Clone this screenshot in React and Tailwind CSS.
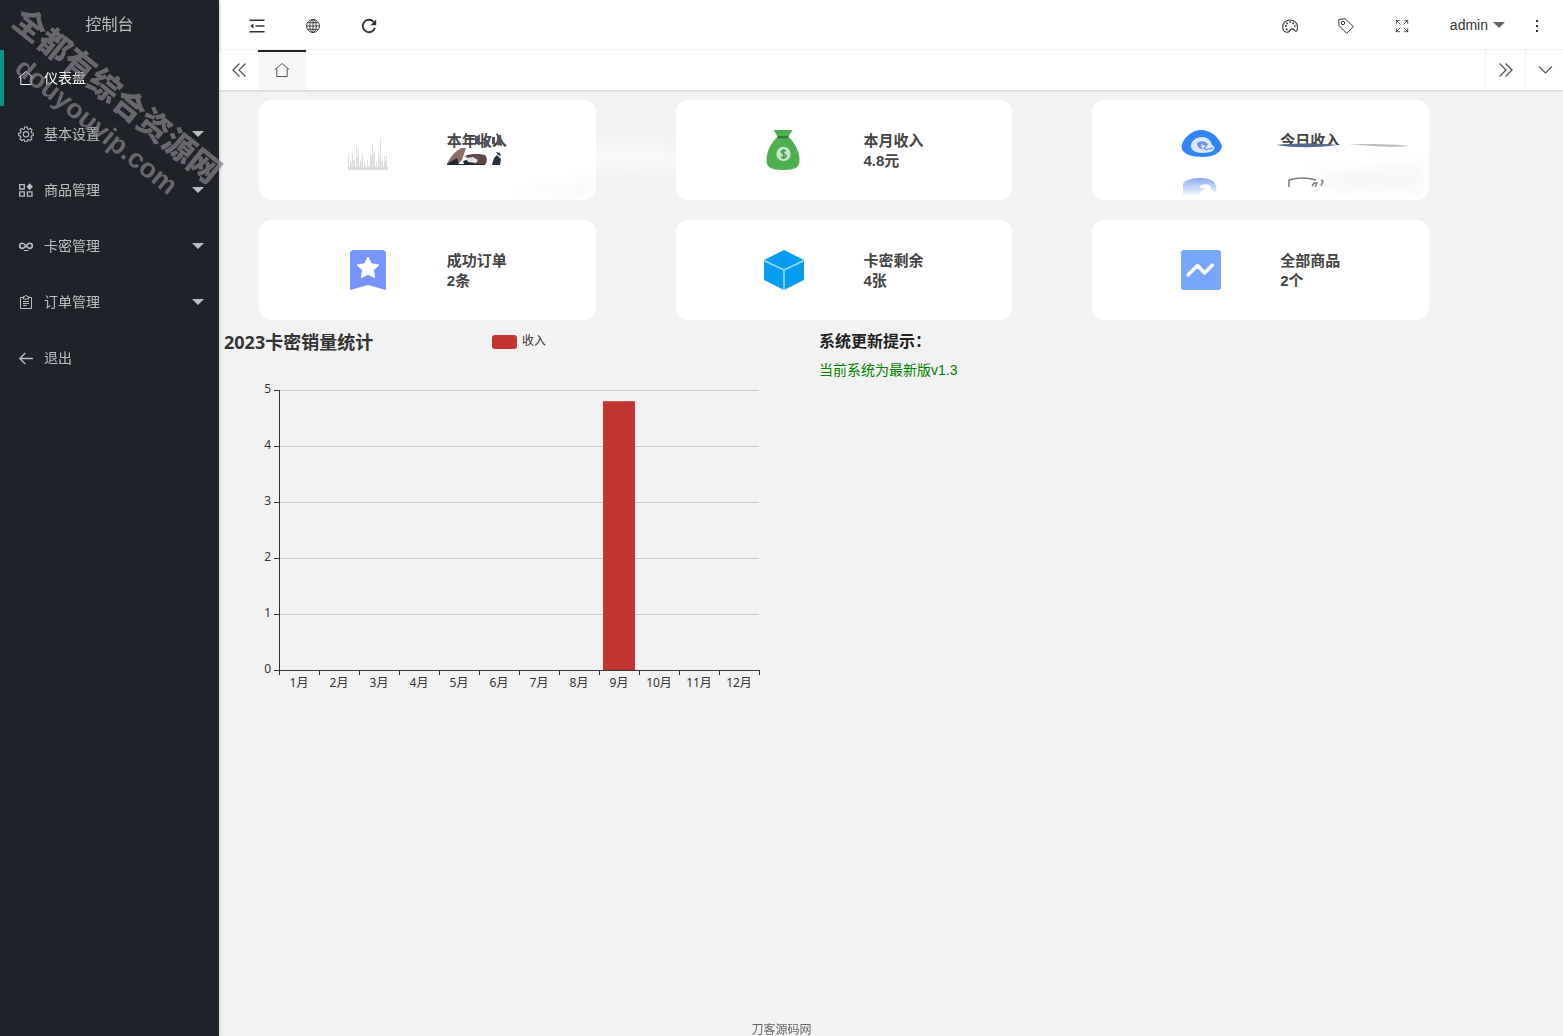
import React from 'react';

const menu = [
  { id: 'home', label: '仪表盘', icon: HomeIcon, active: true },
  { id: 'setting', label: '基本设置', icon: GearIcon, children: true },
  { id: 'goods', label: '商品管理', icon: ComponentIcon, children: true },
  { id: 'cards', label: '卡密管理', icon: LinkIcon, children: true },
  { id: 'orders', label: '订单管理', icon: FormIcon, children: true },
  { id: 'logout', label: '退出', icon: BackIcon },
];

const stats = [
  { id: 'year', title: '本年收入', icon: YearIcon },
  { id: 'month', title: '本月收入', value: '4.8元', icon: MoneyBagIcon },
  { id: 'today', title: '今日收入', icon: TodayIcon },
  { id: 'success', title: '成功订单', value: '2条', icon: BookmarkIcon },
  { id: 'left', title: '卡密剩余', value: '4张', icon: CubeIcon },
  { id: 'all', title: '全部商品', value: '2个', icon: TrendIcon },
];

const sales = [0, 0, 0, 0, 0, 0, 0, 0, 4.8, 0, 0, 0];

function Line({ size = 16, width = 1, children }) {
  return (
    <svg
      width={size}
      height={size}
      viewBox="0 0 16 16"
      fill="none"
      stroke="currentColor"
      strokeWidth={width}
      aria-hidden="true"
      className="shrink-0"
    >
      {children}
    </svg>
  );
}

function HomeIcon() {
  return (
    <Line>
      <path d="M.7 7.6 8 1.5l7.3 6.1M2.8 6.3v8.2h10.4V6.3" />
    </Line>
  );
}

function GearIcon() {
  return (
    <Line width={1.1}>
      <path d="M6.8 1h2.4l.4 1.9 1.1.5 1.7-1.1 1.6 1.7-1 1.7.4 1.1 1.9.5v2.2l-1.9.5-.5 1.2 1.1 1.6-1.7 1.7-1.7-1-1.1.5-.4 1.9H6.8l-.5-1.9-1.1-.5-1.7 1L1.9 13 3 11.3l-.5-1.2L.7 9.6V7.3l1.9-.4.5-1.2L2 4l1.6-1.6 1.7 1 1.1-.5z" />
      <circle cx="8" cy="8.3" r="2.7" />
    </Line>
  );
}

function ComponentIcon() {
  return (
    <Line width={1.3}>
      <path d="M1.7 2.7h4.6v4.3H1.7zM1.7 9.9h4.6v4.3H1.7zM9.4 9.9H14v4.3H9.4z" />
      <path d="m11.7 1.2 3.3 3.5-3.3 3.5-3.2-3.5z" fill="currentColor" stroke="none" />
    </Line>
  );
}

function LinkIcon() {
  return (
    <Line width={1.6}>
      <path d="M8 8C6.500 6 5.600 5.200 4.300 5.200a2.600 2.600 0 0 0 0 5.200C5.900 10.400 7 8.900 8 8s2-2.800 3.700-2.800a2.600 2.600 0 0 1 0 5.200C10.400 10.400 9.500 9.600 8 8Z" />
      <path d="M6 12.500h4.500" strokeWidth="1" />
    </Line>
  );
}

function FormIcon() {
  return (
    <Line>
      <path d="M5 3.500H2.500v11h11v-11H11M5.500 2.500h1.300c0-1.300 2.400-1.300 2.400 0h1.300v2.500h-5zM5 7.500h6M5 9.500h6M5 11.500h3.500" />
    </Line>
  );
}

function BackIcon() {
  return (
    <Line width={1.3}>
      <path d="M15 8.500H2M7.300 3 1.800 8.500l5.500 5.500" />
    </Line>
  );
}

function ShrinkIcon() {
  return (
    <Line width={1.5}>
      <path d="M.5 2.300h15M6.500 8h9M.5 13.800h15" />
      <path d="M4.500 5.500v5L1.300 8z" fill="currentColor" stroke="none" />
    </Line>
  );
}

function GlobeIcon() {
  return (
    <Line width={0.9}>
      <circle cx="8" cy="8" r="6.5" />
      <ellipse cx="8" cy="8" rx="3.2" ry="6.5" />
      <path d="M8 1.500v13M1.500 8h13M2.500 4.700h11M2.500 11.300h11" />
    </Line>
  );
}

function RefreshIcon() {
  return (
    <Line width={1.9}>
      <path d="M13.900 9.800A6.200 6.200 0 1 1 12.600 3.900" />
      <path d="M15.200 1.300v6H9.500z" fill="currentColor" stroke="none" />
    </Line>
  );
}

function PaletteIcon() {
  return (
    <Line width={1.1}>
      <path d="M4.700 14.200C2 13.700.7 11.400.7 8.700.7 4.600 3.900 2 8 2s7.400 2.700 7.400 6.500c0 1.600.3 4.500-1.200 4.700-1.900.2-2-2.700-4.200-2.300-2.600.4-1.900 3.900-5.300 3.300Z" />
      <path d="M3.100 8.200h1.600M4.200 5.300h1.600M7.200 4h1.600M10.300 5.300h1.600M12 8h1.600M3.800 11.300h1.700" strokeWidth="1.7" />
    </Line>
  );
}

function TagIcon() {
  return (
    <Line>
      <path d="M.8 1.500 7 .7l8.300 7.900-6.600 6.700L.9 7.500z" strokeLinejoin="round" />
      <circle cx="5" cy="5" r="1.7" />
    </Line>
  );
}

function FullscreenIcon() {
  return (
    <Line size={14}>
      <path d="M1.500 5.500v-4h4M10.500 1.500h4v4M14.500 10.500v4h-4M5.500 14.500h-4v-4M1.500 1.500l4.500 4.500M14.500 1.500 10 6M14.500 14.500 10 10M1.500 14.500 6 10" />
    </Line>
  );
}

function Chevrons({ flip }) {
  return (
    <Line width={1.3}>
      {flip ? (
        <path d="m1.500 1.500 6.500 6.500-6.500 6.500M7.500 1.500l6.500 6.500-6.500 6.500" />
      ) : (
        <path d="M8.500 1.500 2 8l6.500 6.500M14.500 1.500 8 8l6.500 6.500" />
      )}
    </Line>
  );
}

function Caret() {
  return (
    <svg width="12" height="6" viewBox="0 0 12 6" fill="currentColor" aria-hidden="true">
      <path d="M0 0h12L6 6z" />
    </svg>
  );
}

/* ---------- stat card icons ---------- */

function YearIcon() {
  return (
    <svg width="40" height="40" viewBox="0 0 40 40" aria-hidden="true">
      <path d="M0 36.500h40V40H0z" fill="#dedede" />
      <path
        d="M.5 25v12M2.500 31v6M4.500 24v13M6.500 28v9M8.500 17v20M10.500 19v18M12.500 30v7M14.500 25v12M16.500 32v5M19.500 30v7M22.500 24v13M24.500 16v21M26.500 21v16M28.500 31v6M30.500 22v15M32.500 9v28M34.500 30v7M36.500 26v11M38.500 26v11"
        stroke="#dedede"
      />
      <path d="M3.500 33v4M5.500 30v7M9.500 27v10M13.500 32v5M23.500 26v11M25.500 24v13M31.500 28v9M33.500 31v6M37.500 31v6" stroke="#e4e4e4" />
    </svg>
  );
}

function MoneyBagIcon() {
  return (
    <svg width="40" height="40" viewBox="0 0 40 40" aria-hidden="true">
      <path d="M9.500 0h19l-4 6.500h-11z" fill="#4caf50" />
      <path d="M13.500 7h11C30 11.500 35.500 21 35.500 30c0 7-4 10-16.500 10S2.500 37 2.500 30C2.500 21 8 11.500 13.500 7Z" fill="#4caf50" />
      <path d="M13.500 6h11v2.300h-11z" fill="#2e7d32" />
      <circle cx="19.500" cy="24" r="7.200" fill="#c8e6c9" />
      <path
        d="M22 21.300c-.7-1-4.700-1.300-4.700.7 0 2.300 4.900 1.500 4.900 4 0 2.300-4.300 2-5.200.7M19.600 19v10"
        fill="none"
        stroke="#43a047"
        strokeWidth="1.5"
      />
    </svg>
  );
}

function TodayIcon() {
  return (
    <svg width="40" height="40" viewBox="0 0 40 40" overflow="visible" aria-hidden="true">
      <defs>
        <filter id="soft" x="-20%" y="-20%" width="140%" height="140%">
          <feGaussianBlur stdDeviation="0.6" />
        </filter>
        <linearGradient id="fade" x1="0" y1="0" x2="0" y2="1">
          <stop offset="0" stopColor="#8eabf3" />
          <stop offset="1" stopColor="#f2f5ff" />
        </linearGradient>
      </defs>
      <g filter="url(#soft)">
        <path d="M20 0C10 0 .5 10 .5 17c0 7 11 10 21 10 12 0 19-5 19.500-11C38 8 31 0 20 0Z" fill="#3384fb" />
        <path d="M10 16c0-5 5-9 11-9s9 4 10 8c4 2 3 6-2 7-8 2-19 1-19-6Z" fill="#dce9fd" />
        <path d="M16 13c3-3 9-2 11 1l-3 5c-4 1-8-1-8-6Z" fill="#6c95e4" />
        <path d="m20 14 5 2-4 3z" fill="#dce9fd" />
        <path d="m24 20 8-2" stroke="#3384fb" />
        <path d="M2 65V54c3-7 25-8 31-2 3 4 3 9 1 10-4-5-8-3-13-2l-4 5z" fill="url(#fade)" />
        <path d="M18 57c3-3 9-4 12 0l1 5c-4-2-8-3-13-5Z" fill="#fff" />
      </g>
    </svg>
  );
}

function BookmarkIcon() {
  return (
    <svg width="40" height="40" viewBox="0 0 40 40" aria-hidden="true">
      <path d="M6 0h28a4 4 0 0 1 4 4v36l-18-5L2 40V4a4 4 0 0 1 4-4Z" fill="#7695ff" />
      <path
        d="m20 7 3.300 6.800 7.500 1.100-5.400 5.300 1.300 7.500-6.700-3.500-6.700 3.500 1.300-7.500-5.400-5.300 7.500-1.100z"
        fill="#fff"
        stroke="#fff"
        strokeLinejoin="round"
      />
    </svg>
  );
}

function CubeIcon() {
  return (
    <svg width="40" height="40" viewBox="0 0 40 40" aria-hidden="true">
      <path d="m20 0 20 10v20L20 40 0 30V10z" fill="#079bf2" />
      <path d="m0 10.500 20 9.500 20-9.500M20 20v20" fill="none" stroke="#8fd8ff" strokeWidth="1.7" />
    </svg>
  );
}

function TrendIcon() {
  return (
    <svg width="40" height="40" viewBox="0 0 40 40" aria-hidden="true">
      <rect width="40" height="40" rx="3" fill="#76a7fc" />
      <path
        d="m7 25 9.500-9.500 7 7.500L31.500 15"
        fill="none"
        stroke="#fff"
        strokeWidth="3.4"
        strokeLinecap="round"
        strokeLinejoin="round"
      />
    </svg>
  );
}

/* ---------- smudges over the hidden amounts ---------- */

function YearSmudge() {
  return (
    <svg width="300" height="100" viewBox="0 0 300 100" overflow="visible" aria-hidden="true" className="pointer-events-none absolute top-0 left-[188px]">
      <defs>
        <filter id="haze" x="-30%" y="-60%" width="160%" height="220%">
          <feGaussianBlur stdDeviation="7" />
        </filter>
        <filter id="smear">
          <feGaussianBlur stdDeviation="0.6" />
        </filter>
      </defs>
      <ellipse cx="185" cy="58" rx="60" ry="13" fill="#fff" opacity=".5" filter="url(#haze)" />
      <path d="M70 92 148 80v14H70z" fill="#eee" opacity=".5" filter="url(#haze)" />
      <g filter="url(#smear)">
        <path d="M28 36h4v8h-4zM36 42l6-3v7h-5zM45 37h3v7h-3zM50 35h4l1 11-5-1z" fill="#56545d" />
        <path d="M0 64c3-7 8-13 15-16h4l-4 12-5 5z" fill="#8a6d66" />
        <path d="m0 64 10-6 2 7H0zM16 61l10-3 3 6H17z" fill="#222735" />
        <path d="M18 56c6-3 16-2 20-1 3 4 2 9-1 10h-9z" fill="#5f4749" />
        <path d="m19 58 7-1 5 3-2 3-8-1z" fill="#d7e5e5" />
        <path d="m10 64.500h28" stroke="#222735" />
        <path d="m45 65 2-7 3-3 4 4-1 6zM49 52l4 1 1 3-3-1z" fill="#283043" />
      </g>
    </svg>
  );
}

function TodaySmudge() {
  return (
    <svg width="160" height="100" viewBox="0 0 160 100" overflow="visible" aria-hidden="true" className="pointer-events-none absolute top-0 left-[184px]">
      <path d="M30 74 148 64v28H60z" fill="#eee" opacity=".5" filter="url(#haze)" />
      <g filter="url(#smear)">
        <path d="M0 45c20-2 42-2 61 0-20 3-42 3-61 0Z" fill="#52698f" />
        <path d="M72 44c20 0 45 0 61 2-20 2-35 0-61-2Z" fill="#bbb" />
        <path d="M13 87v-7c9-3 20-2 27 0M36 86l2-3h3l-2 4M45 80l2 1-2 5" fill="none" stroke="#807a70" strokeWidth="1.5" />
      </g>
    </svg>
  );
}

function StatCard({ stat }) {
  const Icon = stat.icon;
  return (
    <div className="relative flex h-[100px] items-center justify-center gap-[59px] rounded-xl bg-white">
      <Icon />
      <div className="h-10 w-[60px] pt-px text-[15px] leading-5 font-bold text-[#444]">
        <p className={stat.id === 'today' ? 'h-3.5 overflow-hidden whitespace-nowrap' : 'whitespace-nowrap'}>{stat.title}</p>
        {stat.value && <p>{stat.value}</p>}
      </div>
      {stat.id === 'year' && <YearSmudge />}
      {stat.id === 'today' && <TodaySmudge />}
    </div>
  );
}

function SalesChart() {
  return (
    <svg
      width="600"
      height="400"
      viewBox="0 0 600 400"
      role="img"
      aria-label="2023卡密销量统计"
      className="shrink-0 font-['Noto_Sans','Noto_Sans_CJK_SC',sans-serif]"
    >
      <text x="5" y="19" fontSize="18" fontWeight="700" fill="#333">2023卡密销量统计</text>
      <rect x="273" y="5" width="25" height="14" rx="3" fill="#c23531" />
      <text x="303" y="15" fontSize="12" fill="#333">收入</text>

      {[5, 4, 3, 2, 1, 0].map((n) => {
        const y = 340 - n * 56;
        return (
          <g key={n}>
            {n > 0 && <rect x="60" y={y} width="480" height="1" fill="#ccc" />}
            <rect x="55" y={y} width="5" height="1" fill="#333" />
            <text x="52" y={y + 3} fontSize="12" textAnchor="end" fill="#333">{n}</text>
          </g>
        );
      })}

      {sales.map((v, i) => (
        <g key={i}>
          {v > 0 && <rect x={64 + i * 40} y={340 - v * 56} width="32" height={v * 56} fill="#c23531" />}
          <rect x={100 + i * 40} y="340" width="1" height="5" fill="#333" />
          <text x={80 + i * 40} y="357" fontSize="12" textAnchor="middle" fill="#333">{i + 1}月</text>
        </g>
      ))}
      <rect x="60" y="60" width="1" height="285" fill="#333" />
      <rect x="60" y="340" width="481" height="1" fill="#333" />
    </svg>
  );
}

function Sidebar() {
  return (
    <aside className="relative z-10 w-[219px] shrink-0 bg-[#20222a] text-sm text-white/70 shadow-[1px_0_3px_rgba(0,0,0,0.15)]">
      <div className="flex h-[50px] items-center justify-center text-base shadow-[0_1px_2px_rgba(0,0,0,0.2)]">控制台</div>
      <nav>
        {menu.map(({ id, label, icon: Icon, active, children }) => (
          <a
            key={id}
            href={'#' + id}
            className={
              active
                ? 'flex h-14 items-center gap-2.5 border-l-4 border-[#009688] pr-[15px] pl-3.5 text-white'
                : 'flex h-14 items-center gap-2.5 border-l-4 border-transparent pr-[15px] pl-3.5'
            }
          >
            <Icon />
            <span className="flex-1">{label}</span>
            {children && <Caret />}
          </a>
        ))}
      </nav>
      {/* watermark */}
      <div className="pointer-events-none absolute top-0 left-0 font-black whitespace-nowrap text-[#808080]/75">
        <p className="absolute top-0 left-[30px] origin-top-left rotate-39 text-[32px] leading-10">全都有综合资源网</p>
        <p className="absolute top-[51px] left-[29px] origin-top-left rotate-39 text-[27px] leading-8">douyouvip.com</p>
      </div>
    </aside>
  );
}

function IconButton({ label, children }) {
  return (
    <button type="button" aria-label={label} className="flex h-full w-14 items-center justify-center">
      {children}
    </button>
  );
}

function Header() {
  return (
    <header className="flex h-[50px] items-center border-b border-[#f2f2f2] bg-white pt-[3px] pl-2.5 text-sm text-[#333]">
      <IconButton label="侧边伸缩"><ShrinkIcon /></IconButton>
      <IconButton label="前台"><GlobeIcon /></IconButton>
      <IconButton label="刷新"><RefreshIcon /></IconButton>
      <div className="flex-1" />
      <IconButton label="主题"><PaletteIcon /></IconButton>
      <IconButton label="便签"><TagIcon /></IconButton>
      <IconButton label="全屏"><FullscreenIcon /></IconButton>
      <button type="button" className="flex h-full items-center gap-[5px] pr-1.5 pb-0.5 pl-5">
        admin
        <span className="text-[#666]"><Caret /></span>
      </button>
      <button type="button" aria-label="更多" className="flex h-full w-[52px] items-center justify-center">
        <svg width="2" height="12" viewBox="0 0 2 12" fill="#333" aria-hidden="true">
          <path d="M0 0h2v2H0zM0 5h2v2H0zM0 10h2v2H0z" />
        </svg>
      </button>
    </header>
  );
}

function TabBar() {
  return (
    <div className="relative flex h-10 bg-white text-[#555] shadow-[0_1px_2px_rgba(0,0,0,0.15)]">
      <button type="button" aria-label="向左" className="flex w-[39px] items-center justify-center"><Chevrons /></button>
      <button type="button" aria-label="主页" className="flex w-12 items-center justify-center border-t-2 border-[#20222a] bg-[#f6f6f6] pb-0.5">
        <HomeIcon />
      </button>
      <div className="flex-1" />
      <button type="button" aria-label="向右" className="flex w-10 items-center justify-center border-l border-[#f2f2f2]">
        <Chevrons flip />
      </button>
      <button type="button" aria-label="标签操作" className="flex w-[38px] items-center justify-center border-l border-[#f2f2f2]">
        <Line width={1.2}><path d="m2 4.500 6.500 6.500L15 4.500" /></Line>
      </button>
    </div>
  );
}

const App = () => {
  return (
    <div className="flex min-h-screen bg-[#f2f2f2] font-['Liberation_Sans','Noto_Sans_CJK_SC',sans-serif]">
      <Sidebar />
      <div className="min-w-0 flex-1">
        <Header />
        <TabBar />
        <main>
          <div className="grid grid-cols-3 gap-x-20 gap-y-5 pt-2.5 pr-[134px] pl-10">
            {stats.map((stat) => (
              <StatCard key={stat.id} stat={stat} />
            ))}
          </div>
          <div className="mt-2.5 flex">
            <SalesChart />
            <section>
              <h2 className="text-base leading-6 font-bold text-[#222]">系统更新提示：</h2>
              <p className="mt-1 text-sm leading-6 text-[#008000]">当前系统为最新版v1.3</p>
            </section>
          </div>
        </main>
      </div>
      <footer className="fixed inset-x-0 bottom-0 h-3.5 text-center text-xs text-[#666]">刀客源码网</footer>
    </div>
  );
};

export default App;
